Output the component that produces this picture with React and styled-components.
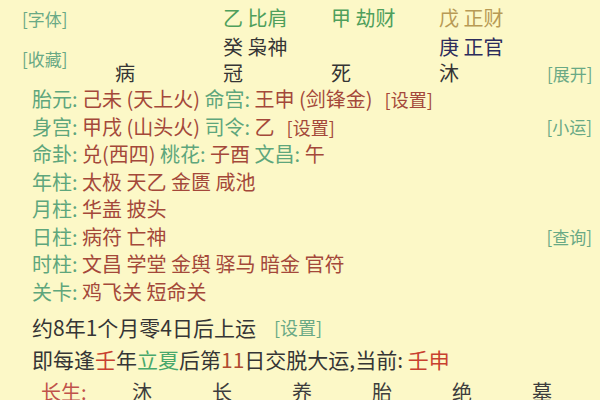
import React from 'react';
import styled, { createGlobalStyle } from 'styled-components';

const tones = {
  label: '#5ea67c',
  value: '#a4483a',
  link: '#69a985',
  green: '#4f9f5c',
  gold: '#b89a55',
  dark: '#353535',
  navy: '#2c2c5c',
  red: '#c8402f',
  fresh: '#48a86c',
  rust: '#b04a30',
};

// grid columns: 1 = side links, 2..5 = pillars, 6 = right links
const topCells = [
  { text: '乙 比肩', col: 3, row: 1, tone: 'green' },
  { text: '甲 劫财', col: 4, row: 1, tone: 'green' },
  { text: '戊 正财', col: 5, row: 1, tone: 'gold' },
  { text: '癸 枭神', col: 3, row: 2, tone: 'dark' },
  { text: '庚 正官', col: 5, row: 2, tone: 'navy' },
  { text: '病', col: 2, row: 3, tone: 'dark' },
  { text: '冠', col: 3, row: 3, tone: 'dark' },
  { text: '死', col: 4, row: 3, tone: 'dark' },
  { text: '沐', col: 5, row: 3, tone: 'dark' },
];

const shensha = [
  { label: '年柱', items: '太极 天乙 金匮 咸池' },
  { label: '月柱', items: '华盖 披头' },
  { label: '日柱', items: '病符 亡神', side: '[查询]' },
  { label: '时柱', items: '文昌 学堂 金舆 驿马 暗金 官符' },
  { label: '关卡', items: '鸡飞关 短命关' },
];

const stages = ['沐', '长', '养', '胎', '绝', '墓'];

function App() {
  return (
    <Page>
      <GlobalStyle />
      <Header>
        <Link $col={1} $row="1">[字体]</Link>
        <Link $col={1} $row="2 / span 2" $lift>[收藏]</Link>
        {topCells.map((c) => (
          <Cell key={c.text} $col={c.col} $row={c.row} $tone={c.tone}>
            {c.text}
          </Cell>
        ))}
        <Link $col={6} $row="3">[展开]</Link>
      </Header>

      <Body>
        <Row>
          <span>
            <Label>胎元: </Label>
            <Val>己未 (天上火) </Val>
            <Label>命宫: </Label>
            <Val>王申 (剑锋金)</Val>
            <Inline $tone="value">[设置]</Inline>
          </span>
        </Row>
        <Row>
          <span>
            <Label>身宫: </Label>
            <Val>甲戌 (山头火) </Val>
            <Label>司令: </Label>
            <Val>乙</Val>
            <Inline $tone="value">[设置]</Inline>
          </span>
          <Side>[小运]</Side>
        </Row>
        <Row>
          <span>
            <Label>命卦: </Label>
            <Val>兑(西四) </Val>
            <Label>桃花: </Label>
            <Val>子酉 </Val>
            <Label>文昌: </Label>
            <Val>午</Val>
          </span>
        </Row>
        {shensha.map((s) => (
          <Row key={s.label}>
            <span>
              <Label>{s.label}: </Label>
              <Val>{s.items}</Val>
            </span>
            {s.side && <Side>{s.side}</Side>}
          </Row>
        ))}
      </Body>

      <Fortune>
        <Line>
          约8年1个月零4日后上运
          <Inline $tone="link" $gap={18}>[设置]</Inline>
        </Line>
        <Line>
          即每逢<Mark $tone="red">壬</Mark>年<Mark $tone="fresh">立夏</Mark>后第
          <Mark $tone="rust">11</Mark>日交脱大运,当前: <Mark $tone="red">壬申</Mark>
        </Line>
      </Fortune>

      <Stages>
        <StageLabel>长生:</StageLabel>
        {stages.map((s) => (
          <Stage key={s}>{s}</Stage>
        ))}
      </Stages>
    </Page>
  );
}

export default App;

const GlobalStyle = createGlobalStyle`
  body {
    margin: 0;
    background: #fcf8c7;
    font-family: "Noto Sans CJK SC", "Noto Sans", sans-serif;
  }
`;

const Page = styled.div`
  width: 600px;
  height: 400px;
  overflow: hidden;
  background: #fcf8c7;
`;

const Header = styled.div`
  display: grid;
  grid-template-columns: 93px repeat(4, 108px) 1fr;
  grid-template-rows: 30px 28px 24px;
  align-items: center;
  padding: 3px 0 0 22px;
`;

const Cell = styled.span`
  grid-column: ${(p) => p.$col};
  grid-row: ${(p) => p.$row};
  font-size: 20px;
  line-height: 1;
  color: ${(p) => tones[p.$tone]};
  white-space: nowrap;
`;

const Link = styled.span`
  grid-column: ${(p) => p.$col};
  grid-row: ${(p) => p.$row};
  margin-bottom: ${(p) => (p.$lift ? '2px' : '0')};
  font-size: 17px;
  line-height: 1;
  color: ${tones.link};
  white-space: nowrap;
`;

const Body = styled.div`
  padding: 0 8px 0 32px;
`;

const Row = styled.div`
  display: flex;
  align-items: center;
  justify-content: space-between;
  height: 27.5px;
  font-size: 20px;
  white-space: nowrap;
`;

const Label = styled.span`
  color: ${tones.label};
`;

const Val = styled.span`
  color: ${tones.value};
`;

const Inline = styled.span`
  margin-left: ${(p) => p.$gap || 12}px;
  font-size: 18px;
  color: ${(p) => tones[p.$tone]};
`;

const Side = styled.span`
  font-size: 17px;
  color: ${tones.link};
`;

const Fortune = styled.div`
  padding: 6px 0 0 32px;
`;

const Line = styled.div`
  display: flex;
  align-items: center;
  height: 32px;
  font-size: 21px;
  color: ${tones.dark};
  white-space: pre;
`;

const Mark = styled.span`
  color: ${(p) => tones[p.$tone]};
`;

const Stages = styled.div`
  display: grid;
  grid-template-columns: 91px repeat(6, 80px);
  align-items: center;
  height: 32px;
  padding-left: 41px;
  font-size: 20px;
`;

const StageLabel = styled.span`
  color: #c0524a;
`;

const Stage = styled.span`
  color: #3d3d3d;
`;
